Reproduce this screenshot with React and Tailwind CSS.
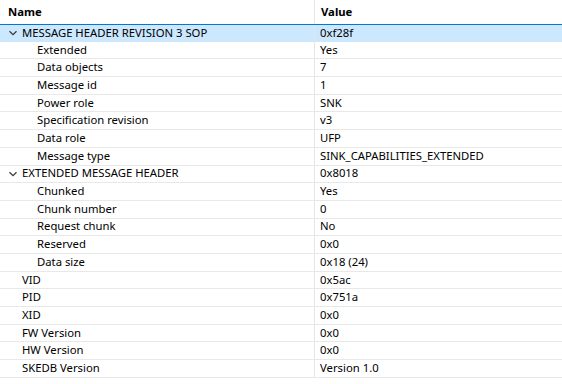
import React from "react";

const rows = [
  { name: "MESSAGE HEADER REVISION 3 SOP", value: "0xf28f", level: 0, expand: true, selected: true },
  { name: "Extended", value: "Yes", level: 1 },
  { name: "Data objects", value: "7", level: 1 },
  { name: "Message id", value: "1", level: 1 },
  { name: "Power role", value: "SNK", level: 1 },
  { name: "Specification revision", value: "v3", level: 1 },
  { name: "Data role", value: "UFP", level: 1 },
  { name: "Message type", value: "SINK_CAPABILITIES_EXTENDED", level: 1 },
  { name: "EXTENDED MESSAGE HEADER", value: "0x8018", level: 0, expand: true },
  { name: "Chunked", value: "Yes", level: 1 },
  { name: "Chunk number", value: "0", level: 1 },
  { name: "Request chunk", value: "No", level: 1 },
  { name: "Reserved", value: "0x0", level: 1 },
  { name: "Data size", value: "0x18 (24)", level: 1 },
  { name: "VID", value: "0x5ac", level: 0 },
  { name: "PID", value: "0x751a", level: 0 },
  { name: "XID", value: "0x0", level: 0 },
  { name: "FW Version", value: "0x0", level: 0 },
  { name: "HW Version", value: "0x0", level: 0 },
  { name: "SKEDB Version", value: "Version 1.0", level: 0 },
];

function Chevron() {
  return (
    <svg width="10" height="10" viewBox="0 0 10 10" className="shrink-0">
      <path d="M1.5 3.2 L5 6.7 L8.5 3.2" fill="none" stroke="#3c3c3c" strokeWidth="1.3" />
    </svg>
  );
}

export default function App() {
  return (
    <div
      className="w-[562px] h-[384px] bg-white overflow-hidden text-[11.3px] text-black"
      style={{ fontFamily: '"Noto Sans", "Open Sans", sans-serif' }}
    >
      <div className="flex h-[24px]">
        <div className="w-[315px] border-r border-[#e5e5e5] flex items-center pl-[8px] font-bold">Name</div>
        <div className="flex-1 flex items-center pl-[6px] font-bold">Value</div>
      </div>
      {rows.map((r, i) => (
        <div
          key={i}
          className={
            r.selected
              ? "flex h-[17.7px] bg-[#cce8ff] border-t border-[#0078d7]"
              : "flex h-[17.7px] border-b border-[#e8e8e8]"
          }
        >
          <div
            className={
              r.level === 1
                ? "w-[315px] border-r border-[#e5e5e5] flex items-center pl-[37px] whitespace-nowrap"
                : r.expand
                ? "w-[315px] border-r border-[#e5e5e5] flex items-center pl-[8px] gap-[4px] whitespace-nowrap"
                : "w-[315px] border-r border-[#e5e5e5] flex items-center pl-[22px] whitespace-nowrap"
            }
          >
            {r.expand && <Chevron />}
            <span>{r.name}</span>
          </div>
          <div className="flex-1 flex items-center pl-[5px] whitespace-nowrap">{r.value}</div>
        </div>
      ))}
    </div>
  );
}
